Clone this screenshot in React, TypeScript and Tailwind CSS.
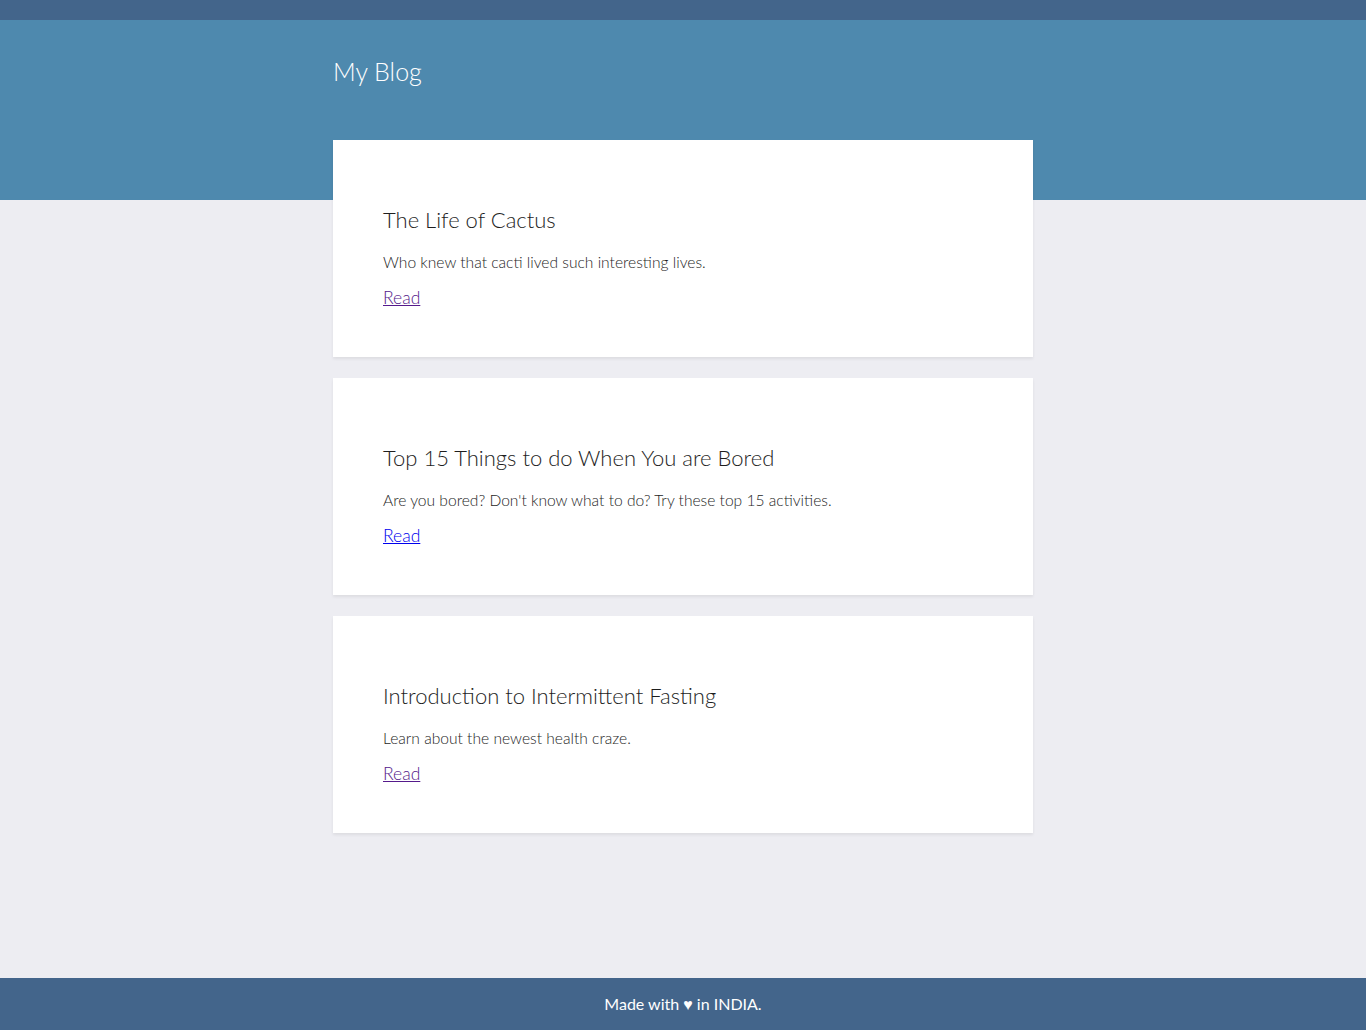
const posts = [
    {title: "The Life of Cactus", desc: "Who knew that cacti lived such interesting lives.", visited: true},
    {title: "Top 15 Things to do When You are Bored", desc: "Are you bored? Don't know what to do? Try these top 15 activities.", visited: false},
    {title: "Introduction to Intermittent Fasting", desc: "Learn about the newest health craze.", visited: true},
];

export default function App() {
    return (
        <div className="min-h-screen flex flex-col bg-[#ededf2] font-['Lato',sans-serif]">
            <div className="h-[20px] bg-[#43658b]"></div>
            <header className="h-[180px] bg-[#4e89ae]">
                <div className="w-[700px] mx-auto pt-[36px]">
                    <h1 className="text-[25px] leading-[30px] text-white font-light">My Blog</h1>
                </div>
            </header>

            <main className="flex-1 -mt-[60px]">
                <div className="w-[700px] mx-auto flex flex-col gap-[21px]">
                    {posts.map((post) => (
                        <article
                            key={post.title}
                            className="bg-white h-[217px] px-[50px] pt-[66px] shadow-[0_2px_3px_rgba(0,0,0,0.07)]"
                        >
                            <h2 className="text-[22px] leading-[28px] text-[#1e1e1e] font-light">{post.title}</h2>
                            <p className="mt-[18px] text-[15.6px] leading-[20px] text-[#1e1e1e] font-light">{post.desc}</p>
                            <a
                                href="#"
                                className={
                                    "inline-block mt-[15px] text-[17.5px] leading-[22px] underline font-light " +
                                    (post.visited ? "text-[#551a8b]" : "text-[#0000ee]")
                                }
                            >
                                Read
                            </a>
                        </article>
                    ))}
                </div>
            </main>

            <footer className="h-[52px] bg-[#43658b] flex items-center justify-center">
                <p className="text-white text-[16px]">Made with ♥ in INDIA.</p>
            </footer>
        </div>
    );
}
